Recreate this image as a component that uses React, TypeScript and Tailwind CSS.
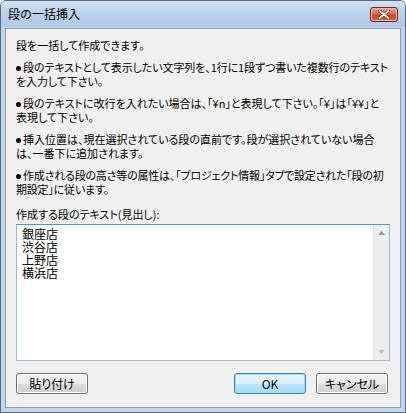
import React from 'react';

const jp = { fontFamily: '"Noto Sans CJK JP", "Noto Sans", sans-serif' };

function Bullet() {
  return <span className="inline-block w-[5px] h-[5px] rounded-full bg-black mr-[2px] align-[1px]" />;
}

function VistaButton({ label, isDefault }: { label: string; isDefault?: boolean }) {
  return (
    <div
      className={`w-[72px] h-[21px] rounded-[3px] border flex items-center justify-center text-[12px] leading-none text-black ${
        isDefault
          ? 'border-[#3c7fb1] bg-[linear-gradient(to_bottom,#eaf6fd_0%,#d9f0fc_50%,#bee6fd_51%,#a7d9f5_100%)] shadow-[inset_0_0_0_1px_#a6dcf7]'
          : 'border-[#707070] bg-[linear-gradient(to_bottom,#f2f2f2_0%,#ebebeb_50%,#dddddd_51%,#cfcfcf_100%)] shadow-[inset_0_0_0_1px_#fcfcfc]'
      }`}
    >
      {label}
    </div>
  );
}

export default function App() {
  const stores = ['銀座店', '渋谷店', '上野店', '横浜店'];

  return (
    <div className="w-[406px] h-[413px] bg-white" style={jp}>
      <div className="w-[406px] h-[413px] rounded-t-[6px] border border-[#55697f] bg-[#c4d6eb] flex flex-col">
        {/* title bar */}
        <div className="h-[26px] shrink-0 flex items-center justify-between pl-[7px] pr-[7px] rounded-t-[5px] bg-[linear-gradient(to_bottom,#d3e2f2_0%,#bcd2ea_45%,#b0c9e5_100%)]">
          <span className="text-[12px] text-black leading-none">段の一括挿入</span>
          <div className="w-[28px] h-[15px] rounded-[3px] border border-[#6b2a20] bg-[linear-gradient(to_bottom,#e8a493_0%,#d4715b_45%,#c2462c_55%,#cf6a4f_100%)] flex items-center justify-center shadow-[inset_0_0_0_1px_#f1b7a6]">
            <svg width="12" height="9" viewBox="0 0 12 9">
              <path d="M1.5 1 L10.5 8 M10.5 1 L1.5 8" stroke="#5a2a20" strokeWidth="3.2" strokeLinecap="round" />
              <path d="M1.5 1 L10.5 8 M10.5 1 L1.5 8" stroke="#ffffff" strokeWidth="1.8" strokeLinecap="round" />
            </svg>
          </div>
        </div>

        {/* client area */}
        <div className="flex-1 mx-[4px] mb-[4px] mt-px border border-[#8a9cb3] bg-[#f0f0f0] flex flex-col pl-[10px] pr-[10px] pt-[9px] text-[11px] leading-[14px] text-black [font-feature-settings:'palt']">
          <div className="flex flex-col gap-[8px] whitespace-nowrap">
            <p>段を一括して作成できます。</p>
            <p className="tracking-[-0.1px]">
              <Bullet />段のテキストとして表示したい文字列を、1行に1段ずつ書いた複数行のテキスト
              <br />
              を入力して下さい。
            </p>
            <p>
              <Bullet />段のテキストに改行を入れたい場合は、「¥n」と表現して下さい。「¥」は「¥¥」と
              <br />
              表現して下さい。
            </p>
            <p>
              <Bullet />挿入位置は、現在選択されている段の直前です。段が選択されていない場合
              <br />
              は、一番下に追加されます。
            </p>
            <p className="tracking-[-0.2px]">
              <Bullet />作成される段の高さ等の属性は、「プロジェクト情報」タブで設定された「段の初
              <br />
              期設定」に従います。
            </p>
          </div>

          <p className="mt-[11px]">作成する段のテキスト(見出し):</p>

          <div className="mt-[3px] h-[137px] flex border border-[#9dbbd9] border-t-[#5d8fc0] bg-white">
            <div className="flex-1 pl-[5px] pt-[2px] text-[12px] leading-[13px] [font-feature-settings:normal]">
              {stores.map(s => (
                <div key={s}>{s}</div>
              ))}
            </div>
            <div className="w-[16px] bg-[#ededed] border-l border-[#e2e2e2] flex flex-col items-center justify-between py-[6px]">
              <svg width="7" height="4" viewBox="0 0 7 4">
                <path d="M0 4 L3.5 0 L7 4 Z" fill="#9a9a9a" />
              </svg>
              <svg width="7" height="4" viewBox="0 0 7 4">
                <path d="M0 0 L3.5 4 L7 0 Z" fill="#c0c0c0" />
              </svg>
            </div>
          </div>

          <div className="mt-[12px] flex items-center pr-[2px]">
            <VistaButton label="貼り付け" />
            <div className="flex-1" />
            <VistaButton label="OK" isDefault />
            <div className="w-[10px]" />
            <VistaButton label="キャンセル" />
          </div>
        </div>
      </div>
    </div>
  );
}
